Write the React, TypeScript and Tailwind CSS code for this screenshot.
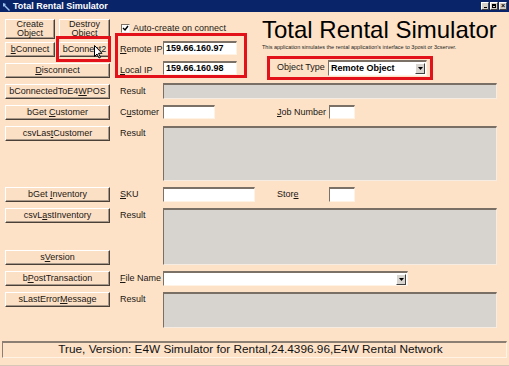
import * as React from 'react'

// Win98-ish form: peach background, 3d buttons, inset fields
const U = ({ children }: { children: React.ReactNode }) => (
  <span className="underline underline-offset-[1px] decoration-[0.5px]">{children}</span>
)

const Btn = ({ children, className = '' }: { children: React.ReactNode; className?: string }) => (
  <button
    className={`flex items-center justify-center text-center text-[9px] leading-[9px] text-[#1c1712] bg-[#fbe0c6] border-t border-l border-t-white border-l-white border-r border-b border-r-[#4a4038] border-b-[#4a4038] shadow-[inset_-1px_-1px_0_#a8988a] ${className}`}
  >
    <span>{children}</span>
  </button>
)

const TextBox = ({ className = '', children }: { className?: string; children?: React.ReactNode }) => (
  <div
    className={`flex items-center bg-white border-t-2 border-l border-t-[#7c7166] border-l-[#7c7166] border-r border-b border-r-[#fff3e6] border-b-[#fff3e6] ${className}`}
  >
    {children}
  </div>
)

const GrayBox = ({ className = '' }: { className?: string }) => (
  <div
    className={`bg-[#d7d3cf] border-t-2 border-l border-t-[#7a6f64] border-l-[#7a6f64] border-r border-b border-r-[#f6ece2] border-b-[#f6ece2] ${className}`}
  />
)

const DropArrow = () => (
  <div className="flex h-[11px] w-[10px] items-center justify-center bg-[#d8d4cf] border-t border-l border-t-white border-l-white border-r border-b border-r-[#404040] border-b-[#404040]">
    <svg width="5" height="3" viewBox="0 0 5 3">
      <path d="M0 0h5L2.5 3z" fill="#000" />
    </svg>
  </div>
)

const Label = ({ children, className = '' }: { children: React.ReactNode; className?: string }) => (
  <div className={`flex h-[15px] items-center text-[9px] text-[#1c1712] ${className}`}>
    <span>{children}</span>
  </div>
)

const Row = ({
  button,
  label,
  children,
  className = '',
}: {
  button: React.ReactNode
  label?: React.ReactNode
  children?: React.ReactNode
  className?: string
}) => (
  <div className={`flex items-start ${className}`}>
    <div className="flex w-[111px] flex-col pl-[5px]">{button}</div>
    <Label className="w-[52px] pl-[9px]">{label}</Label>
    {children}
  </div>
)

const RedBox = ({ className }: { className: string }) => (
  <div className={`pointer-events-none absolute border-[3px] border-[#e3121a] ${className}`} />
)

export default function App() {
  return (
    <div
      className="relative h-[366px] w-[509px] overflow-hidden bg-[#fde2c8] border-b border-[#d8c7b6]"
      style={{ fontFamily: '"Liberation Sans", Arial, sans-serif' }}
    >
      {/* title bar */}
      <div className="flex h-[12px] items-center bg-[#0a246a] pl-[2px] pr-[2px]">
        <svg width="9" height="9" viewBox="0 0 9 9">
          <path d="M1 1l3 1-1 1 5 5-1 1-5-5-1 1z" fill="#9cc3f0" />
        </svg>
        <span className="ml-[2px] text-[9px] leading-[10px] font-bold text-white">Total Rental Simulator</span>
        <div className="ml-auto flex gap-[1px]">
          {['min', 'max', 'close'].map((k) => (
            <div
              key={k}
              className="flex h-[8px] w-[8px] items-center justify-center bg-[#d4d0c8] border-t border-l border-t-white border-l-white border-r border-b border-r-[#404040] border-b-[#404040]"
            >
              {k === 'min' && <div className="mt-[3px] h-[1px] w-[3px] bg-black" />}
              {k === 'max' && <div className="h-[4px] w-[4px] border border-black border-t-2" />}
              {k === 'close' && <span className="text-[7px] leading-[6px] font-bold text-black">×</span>}
            </div>
          ))}
        </div>
      </div>

      {/* top section */}
      <div className="mt-[7px] flex">
        <div className="flex w-[250px] flex-col">
          <div className="flex h-[20px] items-start">
            <div className="flex w-[111px] gap-[4px] pl-[5px]">
              <Btn className="h-[20px] w-[50px]">
                Create
                <br />
                Object
              </Btn>
              <Btn className="h-[20px] w-[51px]">
                Destroy
                <br />
                Object
              </Btn>
            </div>
            <div className="mt-[4px] flex items-center pl-[10px] text-[9px] leading-[10px] text-[#1c1712]">
              <div className="flex h-[9px] w-[9px] items-center justify-center bg-white border border-t-[#7c7166] border-l-[#7c7166] border-r-[#eee] border-b-[#eee]">
                <svg width="7" height="7" viewBox="0 0 7 7">
                  <path d="M1 3l2 2 3-4" stroke="#000" strokeWidth="1.4" fill="none" />
                </svg>
              </div>
              <span className="ml-[3px]">Auto-create on connect</span>
            </div>
          </div>

          <Row
            className="mt-[3px]"
            button={
              <div className="flex gap-[4px]">
                <Btn className="h-[15px] w-[50px]">
                  <U>b</U>Connect
                </Btn>
                <Btn className="h-[15px] w-[51px]">
                  bConne<U>c</U>t2
                </Btn>
              </div>
            }
            label={
              <>
                <U>R</U>emote IP
              </>
            }
          >
            <TextBox className="-mt-[1px] h-[14px] w-[74px] pl-[2px] text-[9px] font-bold text-black">159.66.160.97</TextBox>
          </Row>

          <Row
            className="mt-[6px]"
            button={
              <Btn className="h-[15px] w-[105px]">
                <U>D</U>isconnect
              </Btn>
            }
            label={
              <>
                <U>L</U>ocal IP
              </>
            }
          >
            <TextBox className="-mt-[2px] h-[14px] w-[74px] pl-[2px] text-[9px] font-bold text-black">159.66.160.98</TextBox>
          </Row>
        </div>

        <div className="flex flex-col pl-[12px]">
          <div className="text-[24px] leading-[22px] text-black">Total Rental Simulator</div>
          <div className="mt-[3px] text-[5.5px] leading-[7px] whitespace-nowrap text-[#222]">
            This application simulates the rental application's interface to 3posit or 3cserver.
          </div>
          <div className="mt-[9px] flex items-center pl-[15px]">
            <div className="w-[51px] text-[9px] text-[#1c1712]">Object Type</div>
            <TextBox className="h-[16px] w-[99px] justify-between pl-[2px] pr-[1px] text-[9px] font-bold text-black">
              Remote Object
              <DropArrow />
            </TextBox>
          </div>
        </div>
      </div>

      {/* lower rows */}
      <div className="mt-[6px] flex flex-col gap-[6px]">
        <Row
          button={
            <Btn className="h-[15px] w-[105px]">
              bConnectedToE4<U>W</U>POS
            </Btn>
          }
          label="Result"
        >
          <GrayBox className="-mt-[1px] h-[16px] w-[334px]" />
        </Row>

        <Row
          className="h-[15px]"
          button={
            <Btn className="h-[15px] w-[105px]">
              bGet <U>C</U>ustomer
            </Btn>
          }
          label={
            <>
              C<U>u</U>stomer
            </>
          }
        >
          <TextBox className="h-[14px] w-[52px]" />
          <Label className="ml-[62px] w-[52px]">
            <U>J</U>ob Number
          </Label>
          <TextBox className="h-[14px] w-[26px]" />
        </Row>

        <Row
          className="h-[55px]"
          button={
            <Btn className="h-[15px] w-[105px]">
              csvLas<U>t</U>Customer
            </Btn>
          }
          label="Result"
        >
          <GrayBox className="h-[55px] w-[334px]" />
        </Row>

        <Row
          className="h-[15px]"
          button={
            <Btn className="h-[15px] w-[105px]">
              bGet <U>I</U>nventory
            </Btn>
          }
          label={
            <>
              <U>S</U>KU
            </>
          }
        >
          <TextBox className="h-[15px] w-[92px]" />
          <Label className="ml-[22px] w-[52px]">
            Stor<U>e</U>
          </Label>
          <TextBox className="h-[15px] w-[26px]" />
        </Row>

        <Row
          className="h-[57px]"
          button={
            <>
              <Btn className="h-[15px] w-[105px]">
                csvL<U>a</U>stInventory
              </Btn>
              <Btn className="mt-[27px] h-[15px] w-[105px]">
                s<U>V</U>ersion
              </Btn>
            </>
          }
          label="Result"
        >
          <GrayBox className="h-[57px] w-[334px]" />
        </Row>

        <Row
          className="h-[15px]"
          button={
            <Btn className="h-[15px] w-[105px]">
              b<U>P</U>ostTransaction
            </Btn>
          }
          label={
            <>
              <U>F</U>ile Name
            </>
          }
        >
          <TextBox className="h-[15px] w-[245px] justify-end pr-[1px]">
            <DropArrow />
          </TextBox>
        </Row>

        <Row
          className="h-[36px]"
          button={
            <Btn className="h-[15px] w-[105px]">
              sLastError<U>M</U>essage
            </Btn>
          }
          label="Result"
        >
          <GrayBox className="h-[36px] w-[334px]" />
        </Row>
      </div>

      {/* status */}
      <div className="mx-[2px] mt-[13px] flex h-[17px] items-center justify-center border-t-2 border-l border-t-[#8a7f72] border-l-[#8a7f72] border-r border-b border-r-[#fff3e6] border-b-[#fff3e6] pr-[8px] text-[11.8px] text-[#111]">
        True, Version: E4W Simulator for Rental,24.4396.96,E4W Rental Network
      </div>

      {/* annotation boxes */}
      <RedBox className="left-[56px] top-[36px] h-[26px] w-[55px]" />
      <RedBox className="left-[115px] top-[33px] h-[45px] w-[132px]" />
      <RedBox className="left-[267px] top-[56px] h-[24px] w-[166px]" />

      {/* mouse pointer */}
      <svg className="pointer-events-none absolute left-[94px] top-[45px]" width="9" height="14" viewBox="0 0 9 14">
        <path d="M0.5 0.5v11l2.5-2.5 2 4 1.5-0.7-2-4h3.5z" fill="#fff" stroke="#000" strokeWidth="1" />
      </svg>
    </div>
  )
}
